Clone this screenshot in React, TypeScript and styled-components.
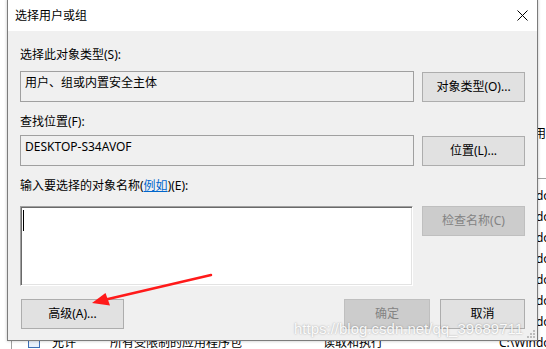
import React from "react";
import styled, { createGlobalStyle } from "styled-components";

const GlobalStyle = createGlobalStyle`
    html, body {
        margin: 0;
        padding: 0;
        background: #ffffff;
    }
    #root {
        width: 546px;
        height: 349px;
    }
`;

const FONT = `"Noto Sans", "Noto Sans CJK SC", sans-serif`;

const Screen = styled.div`
    position: relative;
    width: 546px;
    height: 349px;
    overflow: hidden;
    background: #ffffff;
    font-family: ${FONT};
    font-size: 12px;
    color: #000;
`;

// the window behind the dialog, mostly hidden
const BackWindow = styled.div`
    position: absolute;
    inset: 0;
    background: #ffffff;
`;

const BackCaption = styled.div`
    position: absolute;
    left: 522px;
    top: 126px;
    line-height: 16px;
    white-space: nowrap;
`;

const BackList = styled.div`
    position: absolute;
    left: 11px;
    top: 178px;
    right: 0;
    bottom: 0;
    padding-top: 6px;
    border-left: 1px solid #a0a0a0;
    border-top: 1px solid #a0a0a0;
`;

const BackRow = styled.div`
    display: grid;
    grid-template-columns: 16px 24px 58px 213px 176px auto;
    height: 21px;
    line-height: 21px;
    white-space: nowrap;
`;

const RowIcon = styled.span`
    width: 12px;
    height: 10px;
    margin-top: 6px;
    box-sizing: border-box;
    border: 1px solid #3d6fb6;
    border-top-width: 3px;
    background: #e8f0fb;
`;

const Dialog = styled.div`
    position: absolute;
    left: 7px;
    top: -1px;
    width: 531px;
    height: 342px;
    box-sizing: border-box;
    border: 1px solid #7c7c7c;
    background: #f0f0f0;
    box-shadow: 0 0 3px rgba(0, 0, 0, 0.25);
    display: flex;
    flex-direction: column;
`;

const TitleBar = styled.div`
    height: 31px;
    flex: none;
    background: #ffffff;
    display: flex;
    align-items: center;
    justify-content: space-between;
    padding: 0 9px 0 7px;
    line-height: 16px;
`;

const Body = styled.div`
    display: flex;
    flex-direction: column;
    padding: 0 12px;
`;

const FieldLabel = styled.div<{ $gap: number }>`
    margin-top: ${(p) => p.$gap}px;
    line-height: 16px;
    white-space: nowrap;
`;

const HelpLink = styled.span`
    color: #0066cc;
    text-decoration: underline;
`;

const FieldRow = styled.div<{ $gap: number }>`
    margin-top: ${(p) => p.$gap}px;
    display: flex;
    justify-content: space-between;
    align-items: flex-start;
`;

const ReadOnlyBox = styled.div`
    width: 394px;
    height: 31px;
    box-sizing: border-box;
    border: 1px solid #a0a0a0;
    background: #f0f0f0;
    padding: 3px 4px;
    line-height: 16px;
    white-space: nowrap;
`;

const NameInput = styled.div`
    width: 393px;
    height: 80px;
    box-sizing: border-box;
    background: #ffffff;
    border: 1px solid;
    border-color: #a0a0a0 #ffffff #ffffff #a0a0a0;
    box-shadow: inset 1px 1px 0 #696969, inset -1px -1px 0 #e3e3e3;
    padding: 3px 2px;
`;

const Caret = styled.span`
    display: block;
    width: 1px;
    height: 21px;
    background: #000;
`;

const Button = styled.button<{ $width: number; $offset?: number }>`
    width: ${(p) => p.$width}px;
    height: 30px;
    margin-top: ${(p) => p.$offset ?? 0}px;
    box-sizing: border-box;
    border: 1px solid #adadad;
    background: #e1e1e1;
    color: #000;
    font-family: ${FONT};
    font-size: 12px;
    line-height: 16px;
    padding: 0;
    white-space: nowrap;

    &:disabled {
        border-color: #bfbfbf;
        background: #cccccc;
        color: #838383;
    }
`;

const ActionRow = styled.div`
    margin-top: 13px;
    display: flex;
    align-items: center;
    gap: 10px;
    padding-left: 1px;
`;

const Spacer = styled.div`
    flex: 1;
`;

const Grip = styled.svg`
    position: absolute;
    right: 2px;
    bottom: 2px;
`;

const Overlay = styled.svg`
    position: absolute;
    left: 0;
    top: 0;
    pointer-events: none;
`;

const Watermark = styled.div`
    position: absolute;
    left: 294px;
    top: 320px;
    font-family: "Liberation Sans", Arial, sans-serif;
    font-size: 15px;
    line-height: 18px;
    color: rgba(255, 255, 255, 0.95);
    text-shadow: 0 0 2px rgba(0, 0, 0, 0.35);
    white-space: nowrap;
    pointer-events: none;
`;

const backRows = Array.from({ length: 8 });

const App = () => {
    return (
        <Screen>
            <GlobalStyle />
            <BackWindow>
                <BackCaption>应用)</BackCaption>
                <BackList>
                    {backRows.map((_, i) => (
                        <BackRow key={i}>
                            <span />
                            <RowIcon />
                            <span>允许</span>
                            <span>所有受限制的应用程序包</span>
                            <span>读取和执行</span>
                            <span>C:\Windo</span>
                        </BackRow>
                    ))}
                </BackList>
            </BackWindow>

            <Dialog>
                <TitleBar>
                    <span>选择用户或组</span>
                    <svg width="11" height="11" viewBox="0 0 11 11">
                        <path d="M0.5 0.5 L10.5 10.5 M10.5 0.5 L0.5 10.5" stroke="#000" strokeWidth="1" />
                    </svg>
                </TitleBar>

                <Body>
                    <FieldLabel $gap={16}>选择此对象类型(S):</FieldLabel>
                    <FieldRow $gap={8}>
                        <ReadOnlyBox>用户、组或内置安全主体</ReadOnlyBox>
                        <Button $width={103} $offset={1}>对象类型(O)...</Button>
                    </FieldRow>

                    <FieldLabel $gap={12}>查找位置(F):</FieldLabel>
                    <FieldRow $gap={5}>
                        <ReadOnlyBox>DESKTOP-S34AVOF</ReadOnlyBox>
                        <Button $width={103} $offset={1}>位置(L)...</Button>
                    </FieldRow>

                    <FieldLabel $gap={12}>
                        输入要选择的对象名称(<HelpLink>例如</HelpLink>)(E):
                    </FieldLabel>
                    <FieldRow $gap={12}>
                        <NameInput>
                            <Caret />
                        </NameInput>
                        <Button $width={103} disabled>检查名称(C)</Button>
                    </FieldRow>

                    <ActionRow>
                        <Button $width={103}>高级(A)...</Button>
                        <Spacer />
                        <Button $width={86} disabled>确定</Button>
                        <Button $width={85}>取消</Button>
                    </ActionRow>
                </Body>

                <Grip width="10" height="10" viewBox="0 0 10 10">
                    {[
                        [8, 2],
                        [5, 5],
                        [8, 5],
                        [2, 8],
                        [5, 8],
                        [8, 8],
                    ].map(([x, y]) => (
                        <rect key={`${x}-${y}`} x={x} y={y} width="2" height="2" fill="#bcbcbc" />
                    ))}
                </Grip>
            </Dialog>

            <Overlay width="546" height="349" viewBox="0 0 546 349">
                <line x1="211" y1="275" x2="106" y2="299.5" stroke="#ff1a1a" strokeWidth="2.5" strokeLinecap="round" />
                <polygon points="92,303 105.5,293 110,305.5" fill="#ff1a1a" />
            </Overlay>

            <Watermark>https://blog.csdn.net/qq_39689711</Watermark>
        </Screen>
    );
};

export default App;
